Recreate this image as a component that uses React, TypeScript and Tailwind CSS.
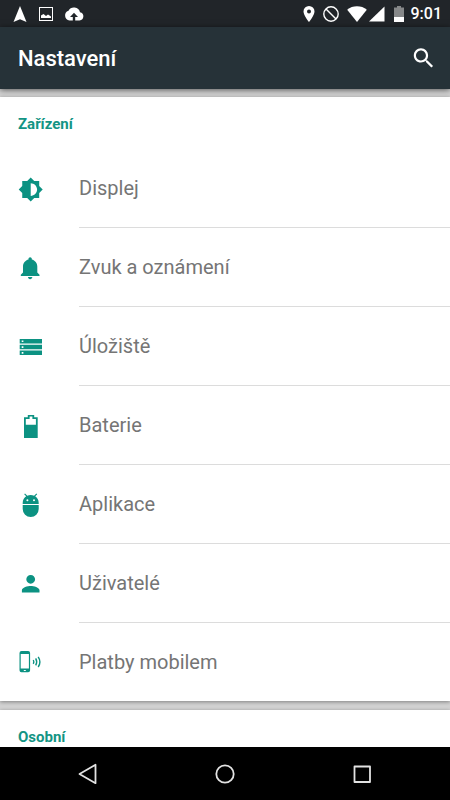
import { FunctionComponent, ReactNode } from 'react'

interface SettingsItem {
  label: string
  icon: ReactNode
}

interface SectionProps {
  title: string
  items?: SettingsItem[]
}

const deviceItems: SettingsItem[] = [
  {
    label: 'Displej',
    icon: (
      <path
        transform="translate(0 0.8) scale(1.06)"
        d="M20 15.31L23.31 12 20 8.69V4h-4.69L12 .69 8.69 4H4v4.69L.69 12 4 15.31V20h4.69L12 23.31 15.31 20H20v-4.69zM12 18V6c3.31 0 6 2.69 6 6s-2.69 6-6 6z"
      />
    ),
  },
  {
    label: 'Zvuk a oznámení',
    icon: (
      <path
        transform="translate(-0.5 0) scale(1.1)"
        d="M11.5 22c1.1 0 2-.9 2-2h-4c0 1.1.9 2 2 2zm6.5-6v-5.5c0-3.07-2.13-5.64-5-6.32V3.5c0-.83-.67-1.5-1.5-1.5S10 2.67 10 3.5v.68c-2.87.68-5 3.25-5 6.32V16l-2 2v1h17v-1l-2-2z"
      />
    ),
  },
  {
    label: 'Úložiště',
    icon: (
      <path
        fillRule="evenodd"
        d="M1.7 5h22.3v4.4H1.7zM3.7 6.4v1.7h1.7V6.4zM1.7 10.8h22.3v4.4H1.7zM3.7 12.2v1.7h1.7v-1.7zM1.7 16.6h22.3V21H1.7zM3.7 18v1.7h1.7V18z"
      />
    ),
  },
  {
    label: 'Baterie',
    icon: (
      <path
        fillRule="evenodd"
        d="M9.8 2h6.4v2.2h3.5V25H6V4.2h3.8zM11.6 3.6v2.3H7.8v5.8h10.1V5.9h-3.5V3.6z"
      />
    ),
  },
  {
    label: 'Aplikace',
    icon: (
      <>
        <path
          fillRule="evenodd"
          d="M4.7 11.9v-1c0-2.8 1.4-5.2 3.5-6.6L6.2 2.3l.8-.8 2.3 2.2a8 8 0 0 1 6.8 0l2.3-2.2.8.8-2 2c2.1 1.4 3.5 3.8 3.5 6.6v1zM9.4 7.2a1 1 0 1 0 0 2 1 1 0 0 0 0-2zM16 7.2a1 1 0 1 0 0 2 1 1 0 0 0 0-2z"
        />
        <path d="M4.7 13h16v4a8 8 0 0 1-16 0z" />
      </>
    ),
  },
  {
    label: 'Uživatelé',
    icon: (
      <path
        transform="translate(-0.5 -0.5) scale(1.1)"
        d="M12 12c2.21 0 4-1.79 4-4s-1.79-4-4-4-4 1.79-4 4 1.79 4 4 4zm0 2c-2.67 0-8 1.34-8 4v2h16v-2c0-2.66-5.33-4-8-4z"
      />
    ),
  },
  {
    label: 'Platby mobilem',
    icon: (
      <>
        <path
          fillRule="evenodd"
          d="M3.5 2h6.6a2 2 0 0 1 2 2v17.3a2 2 0 0 1-2 2H3.5a2 2 0 0 1-2-2V4a2 2 0 0 1 2-2zM2.7 5v14.6h8.2V5zM5.8 20.9v1h2v-1z"
        />
        <path
          fill="none"
          stroke="currentColor"
          strokeWidth="1.4"
          d="M15.3 11q1.1 1.9 0 3.8M17.7 9.4q2 3.5 0 7M20.2 7.8q3.4 5.1 0 10.2"
        />
      </>
    ),
  },
]

const StatusBar: FunctionComponent = () => {
  return (
    <div className="flex h-[27px] items-center justify-between bg-[#212529] pr-2 pl-3 text-white">
      <div className="flex items-center gap-[10px]">
        <svg className="size-4" viewBox="0 0 16 16" fill="currentColor">
          <path d="M8 0l6.5 16L8 13.2 1.5 16z" />
        </svg>
        <svg className="size-4" viewBox="0 0 16 16" fill="currentColor">
          <path
            fillRule="evenodd"
            d="M1 1h14v14H1zM2 2v12h12V2zM3 12V9.5l2.5-1.5 2.5 2 2-1.5L13 10.5V12z"
          />
        </svg>
        <svg className="h-4 w-5" viewBox="0 0 20 16" fill="currentColor">
          <path d="M16 6.2A6.2 6.2 0 0 0 4.5 4.8 5 5 0 0 0 5.5 14.5H8.8V11H6l4-4.3L14 11h-2.8v3.5h4.3a4.2 4.2 0 0 0 .5-8.3z" />
        </svg>
      </div>
      <div className="flex items-center">
        <svg className="h-4 w-3" viewBox="0 0 12 16" fill="currentColor">
          <path
            fillRule="evenodd"
            d="M6 0a5.5 5.5 0 0 0-5.5 5.5C.5 9.5 6 16 6 16s5.5-6.500 5.500-10.500A5.500 5.500 0 0 0 6 0zm0 3.600a2 2 0 1 1 0 4 2 2 0 0 1 0-4z"
          />
        </svg>
        <svg
          className="ml-2 size-4"
          viewBox="0 0 16 16"
          fill="none"
          stroke="currentColor"
          strokeWidth="1.4"
        >
          <circle cx="8" cy="8" r="7.2" />
          <path d="M3 3l10 10" />
        </svg>
        <svg className="ml-2 h-4 w-5" viewBox="0 0 20 16" fill="currentColor">
          <path d="M.2 3.8C5.500-.8 14.500-.8 19.8 3.8L10 16z" />
        </svg>
        <svg className="ml-[2px] size-4" viewBox="0 0 16 16" fill="currentColor">
          <path d="M15.5.5v15H0z" />
        </svg>
        <svg className="ml-2 h-4 w-3" viewBox="0 0 12 16" fill="currentColor">
          <path fill="#868889" d="M4 0h4v1.5h3V11H1V1.5h3z" />
          <path d="M1 11h10v5H1z" />
        </svg>
        <span className="ml-[6px] text-base leading-none font-medium">9:01</span>
      </div>
    </div>
  )
}

const AppBar: FunctionComponent = () => {
  return (
    <header className="z-10 flex h-[62px] items-center justify-between bg-[#263238] pr-[15px] pl-[18px] text-white shadow-[0_1px_6px_rgba(0,0,0,0.6)]">
      <h1 className="text-[22px] font-medium">Nastavení</h1>
      <button type="button" aria-label="Hledat">
        <svg className="size-6" viewBox="0 0 24 24" fill="currentColor">
          <path
            transform="translate(-0.5 -1) scale(1.1)"
            d="M15.5 14h-.79l-.28-.27C15.41 12.59 16 11.11 16 9.5 16 5.91 13.09 3 9.5 3S3 5.91 3 9.5 5.91 16 9.5 16c1.61 0 3.09-.59 4.23-1.57l.27.28v.79l5 4.99L20.49 19l-4.99-5zm-6 0C7.01 14 5 11.99 5 9.5S7.01 5 9.5 5 14 7.01 14 9.5 11.99 14 9.5 14z"
          />
        </svg>
      </button>
    </header>
  )
}

const Section: FunctionComponent<SectionProps> = ({ title, items }) => {
  return (
    <section className="shrink-0 bg-white shadow-[0_1px_4px_rgba(0,0,0,0.4)]">
      <h2 className="flex h-[52px] items-center px-[18px] pt-[2px] text-[15px] font-bold text-[#139484]">
        {title}
      </h2>
      {items && (
        <ul>
          {items.map((item) => (
            <li key={item.label} className="group">
              <a href="#" className="flex items-center pl-[18px]">
                <svg
                  className="size-[26px] shrink-0 text-[#0c9282]"
                  viewBox="0 0 26 26"
                  fill="currentColor"
                >
                  {item.icon}
                </svg>
                <span className="ml-[35px] flex-1 border-b border-[#dcdcdc] py-6 text-xl leading-[30px] text-[#757575] group-last:border-b-0">
                  {item.label}
                </span>
              </a>
            </li>
          ))}
        </ul>
      )}
    </section>
  )
}

const NavigationBar: FunctionComponent = () => {
  return (
    <nav className="z-10 flex h-[53px] items-center justify-center gap-[113px] bg-black text-[#e2e2e2]">
      <button type="button" aria-label="Zpět">
        <svg
          className="size-6"
          viewBox="0 0 24 24"
          fill="none"
          stroke="currentColor"
          strokeWidth="1.8"
          strokeLinejoin="round"
        >
          <path d="M19.5 2.8v18.400L3.500 12z" />
        </svg>
      </button>
      <button type="button" aria-label="Domů">
        <svg
          className="size-6"
          viewBox="0 0 24 24"
          fill="none"
          stroke="currentColor"
          strokeWidth="1.8"
        >
          <circle cx="12" cy="12" r="8.7" />
        </svg>
      </button>
      <button type="button" aria-label="Přehled">
        <svg
          className="size-6"
          viewBox="0 0 24 24"
          fill="none"
          stroke="currentColor"
          strokeWidth="1.8"
          strokeLinejoin="round"
        >
          <path d="M4.5 4.500h15.500v15.500H4.500z" />
        </svg>
      </button>
    </nav>
  )
}

const App: FunctionComponent = () => {
  return (
    <div className="flex h-screen flex-col bg-[#d3d3d3] font-[Roboto,sans-serif]">
      <StatusBar />
      <AppBar />
      <main className="flex min-h-0 flex-1 flex-col gap-[9px] overflow-hidden pt-2">
        <Section title="Zařízení" items={deviceItems} />
        <Section title="Osobní" />
      </main>
      <NavigationBar />
    </div>
  )
}

export default App
